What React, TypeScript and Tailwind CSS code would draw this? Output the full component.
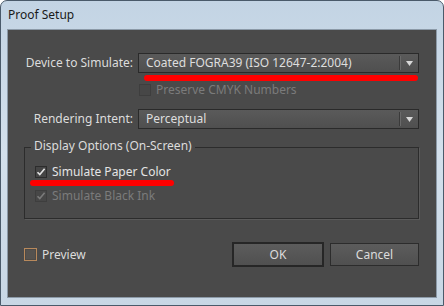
import React from 'react';

const font = { fontFamily: '"Noto Sans", "Open Sans", sans-serif' };

function Select({ value }: { value: string }) {
  return (
    <div className="flex h-[20px] w-[281px] items-center border border-[#2a2a2a] bg-gradient-to-b from-[#5a5a5a] to-[#4f4f4f] text-[12px] text-[#dedede]">
      <span className="flex-1 pl-[7px] leading-none">{value}</span>
      <div className="flex h-full items-center">
        <div className="h-[14px] w-px bg-[#3a3a3a]" />
        <div className="h-[14px] w-px bg-[#6a6a6a]" />
        <div className="flex w-[17px] justify-center">
          <svg width="7" height="5" viewBox="0 0 7 5">
            <path d="M0 0h7L3.5 5z" fill="#d8d8d8" />
          </svg>
        </div>
      </div>
    </div>
  );
}

function Check({ checked, disabled }: { checked?: boolean; disabled?: boolean }) {
  return (
    <div
      className={`flex h-[12px] w-[12px] items-center justify-center border ${
        disabled ? 'border-[#3e3e3e] bg-[#474747]' : 'border-[#2c2c2c] bg-[#454545]'
      }`}
    >
      {checked && (
        <svg width="10" height="10" viewBox="0 0 10 10">
          <path
            d="M1.5 5.2l2.3 2.4L8.6 1.8"
            fill="none"
            stroke={disabled ? '#7a7a7a' : '#e2e2e2'}
            strokeWidth="1.6"
          />
        </svg>
      )}
    </div>
  );
}

export default function App() {
  return (
    <div
      className="flex h-[306px] w-[444px] flex-col overflow-hidden rounded-t-[7px] border border-[#4a5a6a] bg-gradient-to-b from-[#c3d4e4] via-[#d3e0ec] to-[#c8d7e5]"
      style={font}
    >
      <div className="flex h-[28px] shrink-0 items-center px-[7px] text-[12px] text-[#1a1a1a]">Proof Setup</div>
      <div className="mx-[6px] mb-[7px] flex flex-1 flex-col border border-[#8c9aa8] bg-[#4a4a4a] text-[12px] text-[#dcdcdc]">
        <div className="flex flex-col pl-[16px] pr-[17px] pt-[23px]">
          {/* device row */}
          <div className="flex items-center gap-[5px]">
            <div className="w-[109px] text-right leading-none">Device to Simulate:</div>
            <Select value="Coated FOGRA39 (ISO 12647-2:2004)" />
          </div>
          <div className="ml-[120px] mt-[2px] h-[6px] w-[274px] rounded-full bg-[#ff0000]" />
          <div className="ml-[115px] mt-[3px] flex items-center gap-[5px]">
            <Check disabled />
            <span className="leading-none text-[#7b7b7b]">Preserve CMYK Numbers</span>
          </div>
          {/* intent row */}
          <div className="mt-[13px] flex items-center gap-[5px]">
            <div className="w-[109px] text-right leading-none">Rendering Intent:</div>
            <Select value="Perceptual" />
          </div>
          {/* group */}
          <div className="relative mt-[18px] h-[72px] border border-[#2c2c2c] shadow-[1px_1px_0_#5a5a5a]">
            <span className="absolute left-[6px] top-[-8px] bg-[#4a4a4a] px-[3px] leading-none">
              Display Options (On-Screen)
            </span>
            <div className="ml-[10px] mt-[18px] flex items-center gap-[5px]">
              <Check checked />
              <span className="leading-none text-[#e4e4e4]">Simulate Paper Color</span>
            </div>
            <div className="ml-[5px] mt-[2px] h-[6px] w-[144px] rounded-full bg-[#ff0000]" />
            <div className="ml-[10px] mt-[4px] flex items-center gap-[5px]">
              <Check checked disabled />
              <span className="leading-none text-[#7b7b7b]">Simulate Black Ink</span>
            </div>
          </div>
          {/* bottom */}
          <div className="mt-[23px] flex items-center">
            <div className="flex items-center gap-[5px]">
              <div className="flex h-[13px] w-[13px] items-center justify-center border border-[#b8895c] bg-[#4e4a46]">
                <div className="h-[9px] w-[9px] bg-[#55524f]" />
              </div>
              <span className="leading-none">Preview</span>
            </div>
            <div className="ml-auto flex items-center gap-[6px]">
              <button className="flex h-[25px] w-[92px] items-center justify-center border-2 border-[#262626] bg-gradient-to-b from-[#5c5c5c] to-[#505050] text-[12px] text-[#dcdcdc]">
                OK
              </button>
              <button className="flex h-[23px] w-[89px] items-center justify-center border border-[#2c2c2c] bg-gradient-to-b from-[#5c5c5c] to-[#505050] text-[12px] text-[#dcdcdc]">
                Cancel
              </button>
            </div>
          </div>
        </div>
      </div>
    </div>
  );
}
